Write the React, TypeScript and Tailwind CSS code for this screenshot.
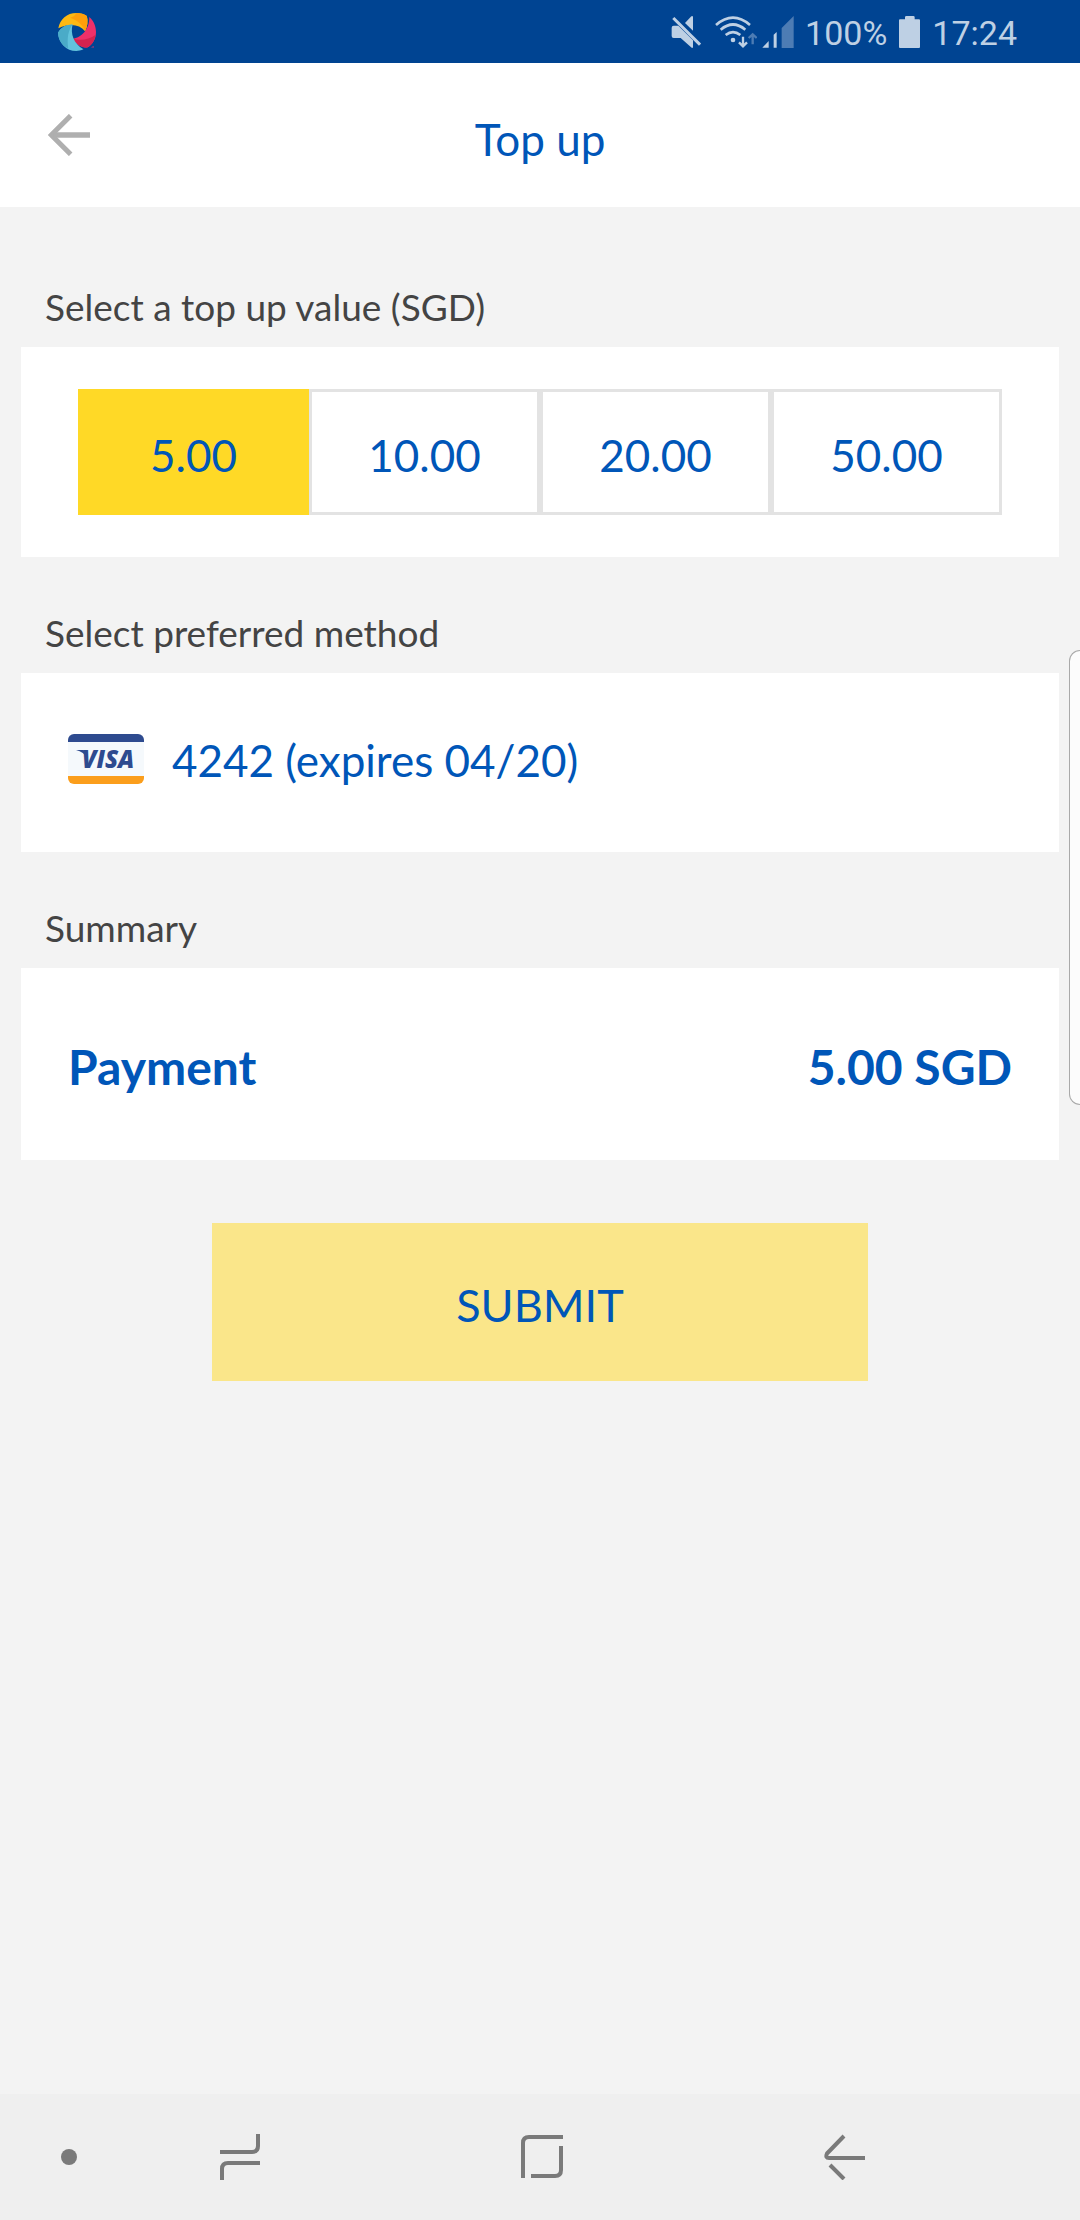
import { useState, type ReactNode } from "react";

const AMOUNTS = ["5.00", "10.00", "20.00", "50.00"];

function AppLogo() {
  return (
    <svg className="h-[38px] w-[38px]" viewBox="0 0 112 112" aria-hidden="true">
      <path d="M1 45C6 18 26 0 54 0C66 0 78 3 85 9C89 24 87 40 80 54C62 32 34 30 1 45Z" fill="#fdb913" />
      <path d="M54 0C66 0 78 3 85 9C89 24 87 40 80 54C74 38 60 22 36 14C44 12 52 6 54 0Z" fill="#ff9f0a" />
      <path d="M92 12C106 24 112 40 112 56C112 76 102 94 86 102C68 102 54 92 43 76C68 74 94 48 92 12Z" fill="#ef3069" />
      <path d="M43 76C68 82 92 78 111 64C108 82 100 94 86 102C68 102 54 92 43 76Z" fill="#d4234f" />
      <path d="M43 34C36 62 46 90 75 107C68 111 60 112 54 112C24 112 2 88 0 58C10 42 24 34 43 34Z" fill="#62c3dc" />
      <path d="M43 34C30 52 26 74 30 104C12 96 1 80 0 58C10 42 24 34 43 34Z" fill="#4aabc8" />
      <path d="M97 101L105 98L106 102Z" fill="#ef3069" />
    </svg>
  );
}

function MuteIcon() {
  return (
    <svg className="h-8 w-[30px]" viewBox="90 46 90 96" fill="#bed0e4" aria-hidden="true">
      <path d="M132 67L151 47H156V90Z" />
      <path d="M92 81Q92 75 98 75H112L156 119V141H152L119 112H98Q92 112 92 106Z" />
      <path d="M97 52L177 132" stroke="#bed0e4" strokeWidth="9" fill="none" />
    </svg>
  );
}

function WifiIcon() {
  return (
    <svg className="h-8 w-[42px]" viewBox="225 46 126 96" fill="none" stroke="#bed0e4" strokeWidth="8" aria-hidden="true">
      <path d="M228 73Q279 29 330 73" />
      <path d="M242 87Q279 56 316 87" />
      <path d="M257 103Q279 86 301 103" />
      <circle cx="279" cy="118" r="7" fill="#bed0e4" stroke="none" />
      <path d="M309 108V136M297 125L309 137L321 125" strokeWidth="7" />
      <path d="M338 131V102M326 112L338 101L350 112" stroke="#4d7cb4" strokeWidth="7" />
    </svg>
  );
}

function SignalIcon() {
  return (
    <svg className="h-8 w-8" viewBox="367 47 96 96" fill="#bed0e4" aria-hidden="true">
      <path d="M368 142L387 122V142Z" />
      <path d="M402 103L411 95V142H402Z" />
      <path d="M426 83L462 47V143H426Z" fill="#4d7cb4" />
    </svg>
  );
}

function BatteryIcon() {
  return (
    <svg className="h-8 w-[21px]" viewBox="777 47 63 96" fill="#bed0e4" aria-hidden="true">
      <path d="M795 57V51Q795 47 799 47H820Q824 47 824 51V57H837Q840 57 840 60V140Q840 143 837 143H780Q777 143 777 140V60Q777 57 780 57Z" />
    </svg>
  );
}

function StatusBar() {
  return (
    <div className="flex h-[63px] items-center justify-between bg-[#004492] pl-[58px] pr-[63px] font-['Roboto',sans-serif] text-[34px] leading-[40px] text-[#bed0e4]">
      <AppLogo />
      <div className="flex items-center">
        <MuteIcon />
        <span className="ml-[14px] flex gap-[5px]">
          <WifiIcon />
          <SignalIcon />
        </span>
        <span className="ml-[11px] pt-0.5">100%</span>
        <span className="mx-3 flex">
          <BatteryIcon />
        </span>
        <span className="pt-0.5">17:24</span>
      </div>
    </div>
  );
}

function VisaCard() {
  return (
    <span
      role="img"
      aria-label="Visa"
      className="relative flex h-[50px] w-[76px] items-center justify-center overflow-hidden rounded-md border-y-8 border-t-[#2e4b8f] border-b-[#fb9e1c] bg-[#f5f9fc] pl-1 font-['Open_Sans',sans-serif] text-[24px] leading-[34px] font-extrabold text-[#2e4b8f] italic"
    >
      <svg className="absolute top-2 left-2 h-2 w-3" viewBox="0 0 12 8" aria-hidden="true">
        <path d="M0 0H7Q10 0 10 3L11 8Q8 2 0 0Z" fill="#2e4b8f" />
      </svg>
      VISA
    </span>
  );
}

function Section({ title, children }: { title: string; children: ReactNode }) {
  return (
    <section>
      <h2 className="px-6 pt-[54px] pb-[18px] text-[37px] leading-[44px] text-[#444444]">{title}</h2>
      {children}
    </section>
  );
}

function NavBar() {
  return (
    <nav className="flex h-[126px] items-center bg-[#efefef] text-[#7a7a7a]" aria-label="System">
      <button type="button" aria-label="Toggle bar" className="flex w-[89px] pl-[61px]">
        <span className="h-4 w-4 rounded-full bg-[#7a7a7a]" />
      </button>
      <div className="flex flex-1 pr-[84px]">
        <button type="button" aria-label="Recent apps" className="flex flex-1 justify-center">
          <svg className="h-[46px] w-[42px]" viewBox="0 0 42 46" fill="none" stroke="currentColor" strokeWidth="4" aria-hidden="true">
            <path d="M1 18H33Q39 18 39 12V0" />
            <path d="M41 29H9Q3 29 3 35V46" />
          </svg>
        </button>
        <button type="button" aria-label="Home" className="flex flex-1 justify-center">
          <svg className="h-[46px] w-[42px]" viewBox="0 0 42 46" fill="none" stroke="currentColor" strokeWidth="4" aria-hidden="true">
            <path d="M2 44V9Q2 3 8 3H42" />
            <path d="M40 12V36Q40 42 34 42H10" />
          </svg>
        </button>
        <button type="button" aria-label="Back" className="flex flex-1 justify-center">
          <svg className="h-[46px] w-[42px]" viewBox="0 0 42 46" fill="none" stroke="currentColor" strokeWidth="4" aria-hidden="true">
            <path d="M20 2L3 19.500Q1 24 5 24H41" />
            <path d="M6 31L20 45" />
          </svg>
        </button>
      </div>
    </nav>
  );
}

export default function App() {
  const [amount, setAmount] = useState("5.00");

  return (
    <div className="relative flex min-h-screen flex-col bg-[#f3f3f3] font-['Lato',sans-serif] text-[#0056b8]">
      <StatusBar />
      <header className="grid h-36 grid-cols-[1fr_auto_1fr] items-center bg-white px-12">
        <button type="button" aria-label="Back" className="w-[42px]">
          <svg className="h-[42px] w-[42px]" viewBox="0 0 126 126" fill="none" stroke="#afafaf" aria-hidden="true">
            <path d="M68 5L10 63L68 121" strokeWidth="15" />
            <path d="M16 63H126" strokeWidth="17" />
          </svg>
        </button>
        <h1 className="pt-2 text-[44px] leading-[52px]">Top up</h1>
      </header>

      <main className="flex-1 px-[21px] pt-6">
        <Section title="Select a top up value (SGD)">
          <div className="flex bg-white px-[57px] py-[42px]">
            {AMOUNTS.map((value) => (
              <button
                key={value}
                type="button"
                aria-pressed={value === amount}
                onClick={() => setAmount(value)}
                className={
                  value === amount
                    ? "h-[126px] flex-1 border-3 border-[#ffd926] bg-[#ffd926] pt-1.5 text-[44px] leading-[52px]"
                    : "h-[126px] flex-1 border-3 border-[#e3e3e3] bg-white pt-1.5 text-[44px] leading-[52px]"
                }
              >
                {value}
              </button>
            ))}
          </div>
        </Section>

        <Section title="Select preferred method">
          <button type="button" className="flex w-full items-center gap-7 bg-white px-[47px] pt-[60px] pb-[67px] text-left">
            <VisaCard />
            <span className="pt-0.5 text-[44px] leading-[50px]">4242 (expires 04/20)</span>
          </button>
        </Section>

        <Section title="Summary">
          <div className="flex items-center justify-between bg-white px-[47px] pt-[71px] pb-[65px] text-[48px] leading-[56px] font-bold">
            <span>Payment</span>
            <span>{amount} SGD</span>
          </div>
        </Section>

        <button type="button" className="mx-auto mt-[63px] block h-[158px] w-[63.2%] bg-[#fae68a] pt-1.5 text-[45px] leading-[56px]">
          SUBMIT
        </button>
      </main>

      <NavBar />

      <div className="absolute top-[650px] right-0 h-[455px] w-[11px] rounded-l-[14px] border border-r-0 border-[#a9a9a9] bg-[#fcfcfc]" />
    </div>
  );
}
